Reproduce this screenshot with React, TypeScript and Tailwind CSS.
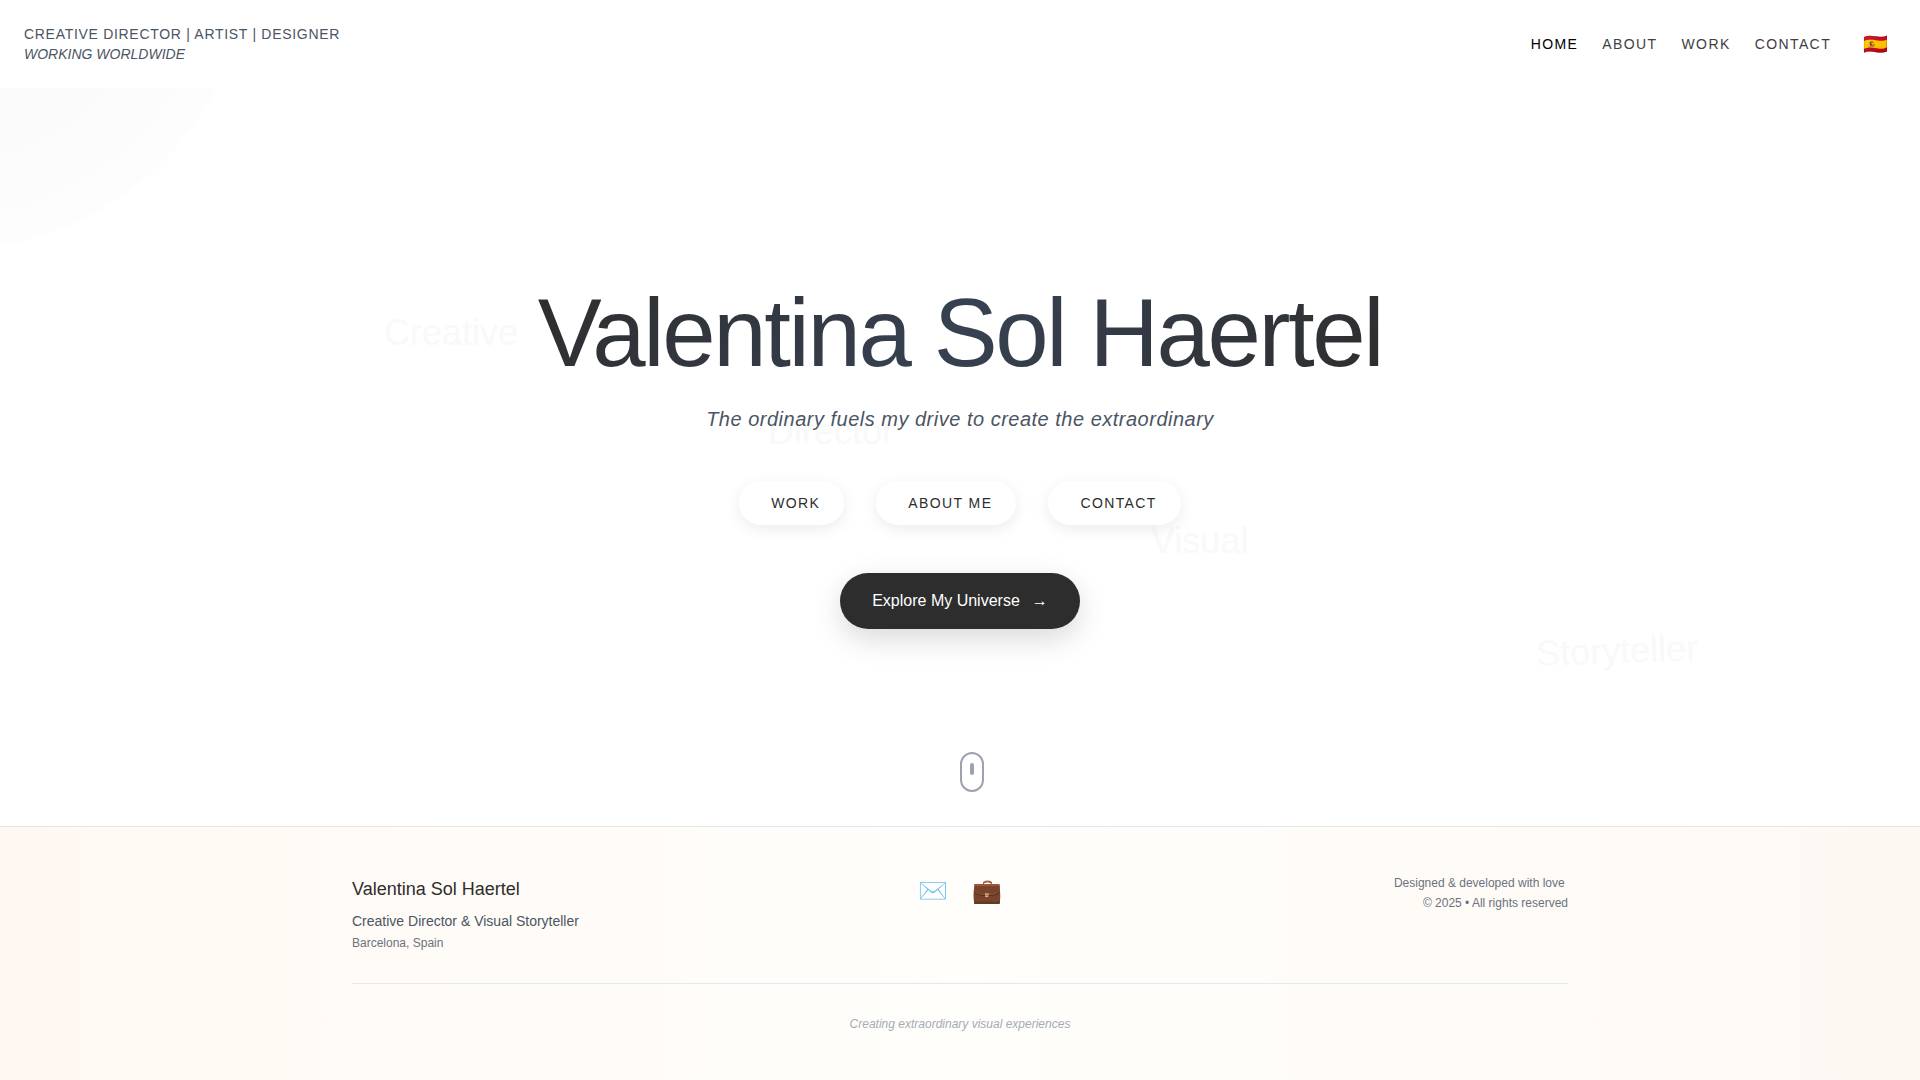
export default function App() {
  const font = "font-['Liberation_Sans',Arial,sans-serif]";
  return (
    <div className={`${font} antialiased relative h-[1080px] w-full overflow-hidden bg-white flex flex-col`}>
      <div className="absolute -left-[350px] -top-[350px] w-[600px] h-[600px] rounded-full bg-[radial-gradient(circle,rgba(0,0,0,0.025)_0%,rgba(0,0,0,0.02)_40%,rgba(0,0,0,0.008)_70%,rgba(0,0,0,0)_100%)]" />
      <header className="relative z-10 h-[88px] bg-white/95 flex items-center justify-between pl-6 pr-8">
        <div className="text-[14px] leading-5 font-light text-[#4b5563]">
          <div className="tracking-[0.7px]">CREATIVE DIRECTOR | ARTIST | DESIGNER</div>
          <div className="italic">WORKING WORLDWIDE</div>
        </div>
        <nav className="flex items-center text-[14px] font-light tracking-[1.4px] text-[#404040]">
          <a className="text-[#000000]">HOME</a>
          <a className="ml-6">ABOUT</a>
          <a className="ml-6">WORK</a>
          <a className="ml-6">CONTACT</a>
          <span className="ml-8 text-[20px] leading-none tracking-normal font-['Noto_Color_Emoji',sans-serif]">🇪🇸</span>
        </nav>
      </header>
      <main className="relative flex-1 flex flex-col items-center overflow-hidden">
        <span className="absolute left-[384px] top-[215px] text-[36px] font-light leading-[60px] text-[#f8f9f9]">Creative</span>
        <span className="absolute left-[768px] top-[314px] text-[36px] font-light leading-[60px] text-[#f8f9f9]">Director</span>
        <span className="absolute left-[1151px] top-[423px] text-[36px] font-light leading-[60px] text-[#f8f9f9]">Visual</span>
        <span className="absolute left-[1536px] top-[533px] text-[36px] font-light leading-[60px] text-[#f8f9f9] -rotate-2">Storyteller</span>
        <h1 className="relative mt-[197px] text-[96px] font-light leading-[96px] tracking-[-2.4px] bg-[linear-gradient(135deg,#2d2d2d_0%,#374151_50%,#2d2d2d_100%)] bg-clip-text text-transparent">Valentina Sol Haertel</h1>
        <p className="relative mt-6 text-[20px] font-light leading-7 italic tracking-[0.5px] text-[#4b5563]">The ordinary fuels my drive to create the extraordinary</p>
        <div className="relative mt-[48px] flex gap-8">
          {["WORK", "ABOUT ME", "CONTACT"].map((t) => (
            <button key={t} className="h-11 rounded-[22px] bg-white pl-8 pr-6 text-[14px] font-light tracking-[1.4px] text-[#2d2d2d] shadow-[0_4px_15px_rgba(0,0,0,0.08)]">{t}</button>
          ))}
        </div>
        <button className="relative mt-12 h-14 rounded-full bg-[#2d2d2d] pl-8 pr-8 text-[16px] font-light text-white flex items-center shadow-[0_10px_30px_rgba(0,0,0,0.15)]">
          Explore My Universe<span className="ml-3">→</span>
        </button>
        <div className="absolute left-[960px] top-[664px] h-10 w-6 rounded-full border-2 border-[#9ca3af] flex justify-center pt-[9px]">
          <div className="h-3 w-1 -ml-px rounded-full bg-[#9ca3af]" />
        </div>
      </main>
      <footer className="h-[254px] border-t border-[#e5e7eb] bg-[linear-gradient(90deg,#fff8f2_0%,#fffefb_50%,#fef8f3_100%)] px-8 pt-[47px]">
        <div className="mx-auto w-[1216px]">
          <div className="grid grid-cols-3 h-[110px] border-b border-[#e5e7eb]">
            <div>
              <div className="text-[18px] leading-7 mt-px text-[#2d2d2d]">Valentina Sol Haertel</div>
              <div className="mt-2 text-[14px] leading-5 text-[#4b5563]">Creative Director &amp; Visual Storyteller</div>
              <div className="mt-1 text-[12px] leading-4 text-[#6b7280]">Barcelona, Spain</div>
            </div>
            <div className="flex justify-center gap-6 text-[24px] leading-8 pt-[1px] font-['Noto_Color_Emoji',sans-serif]">
              <span>✉️</span><span>💼</span>
            </div>
            <div className="text-right text-[12px] leading-5 text-[#6b7280] -mt-[1px]">
              <div className="whitespace-pre">Designed &amp; developed with love </div>
              <div>© 2025 • All rights reserved</div>
            </div>
          </div>
          <div className="mt-8 text-center text-[12px] leading-4 italic text-[#a5abb5]">Creating extraordinary visual experiences</div>
        </div>
      </footer>
    </div>
  );
}
